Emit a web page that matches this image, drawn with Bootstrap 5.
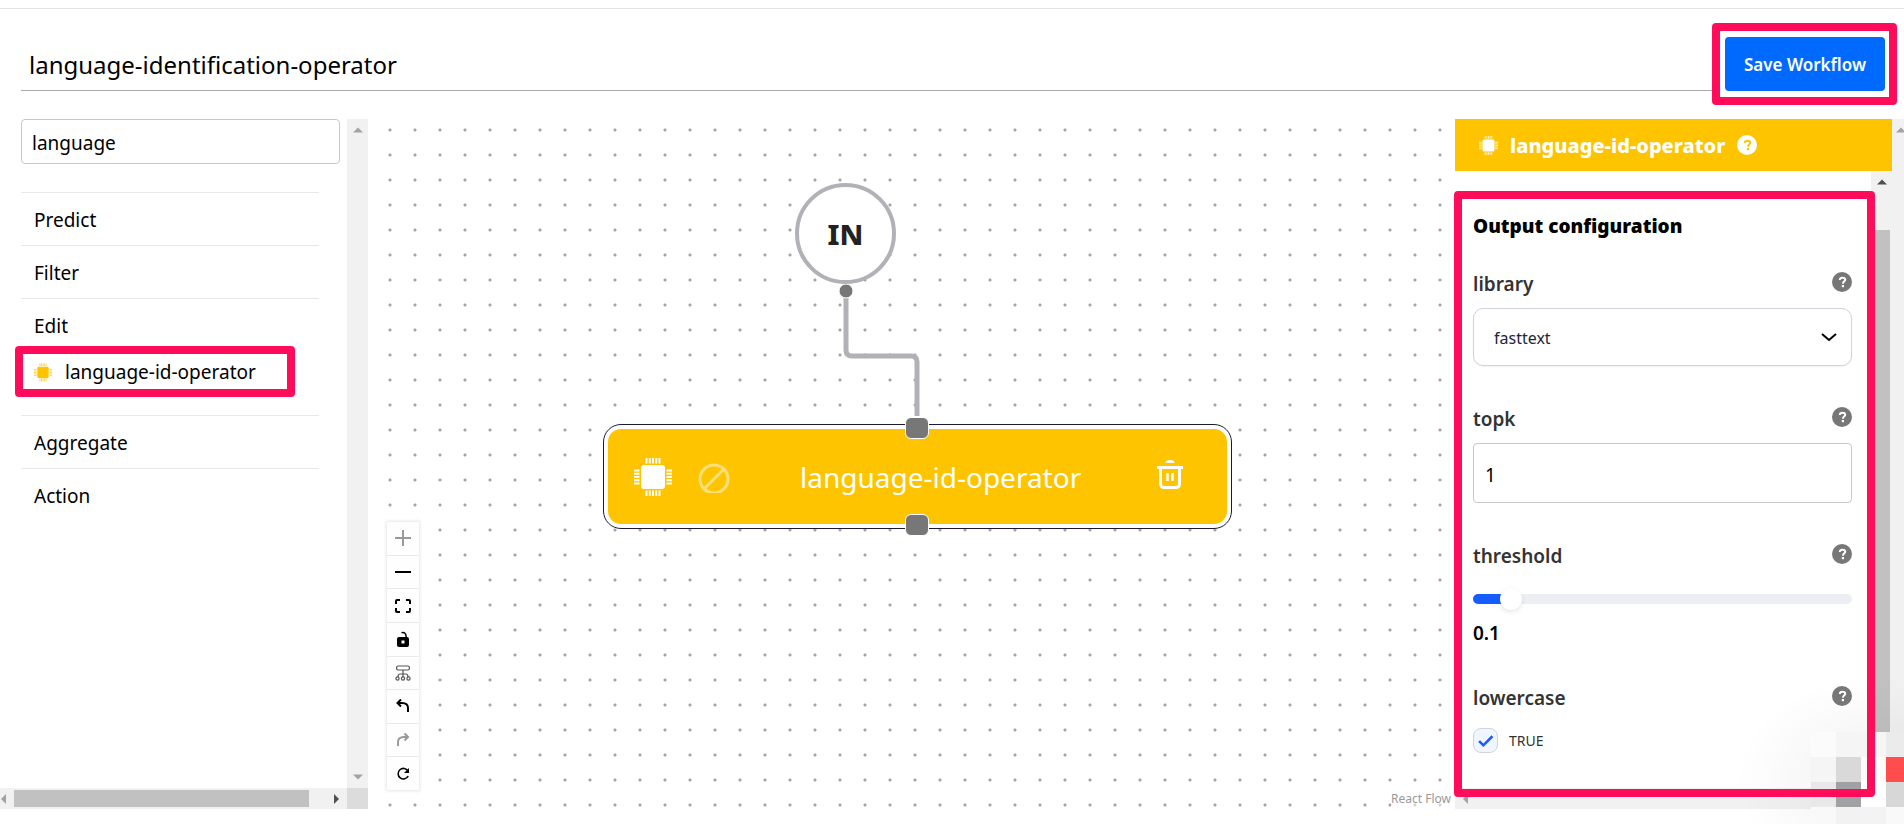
<!DOCTYPE html>
<html lang="en">
<head>
<meta charset="utf-8">
<meta name="viewport" content="width=device-width, initial-scale=1">
<title>language-identification-operator</title>
<link href="https://cdn.jsdelivr.net/npm/bootstrap@5.3.0/dist/css/bootstrap.min.css" rel="stylesheet">
<script src="https://cdn.jsdelivr.net/npm/bootstrap@5.3.0/dist/js/bootstrap.bundle.min.js"></script>
<style>
  :root { --pink: #ff0d5b; --amber: #ffc400; --wire: #b1b1b7; }
  body { font-family: "Noto Sans", "Open Sans", sans-serif; color: #000; background: #fff; overflow: hidden; }
  .top-rule { height: 9px; border-bottom: 1px solid #e4e4e8; }
  .marked { border: 8px solid var(--pink); border-radius: 4px; }

  .page-head { padding: 14px 7px 14px 21px; }
  .title-input { height: 68px; padding: 16px 8px 0; border: 0; border-bottom: 1px solid #a8a8a8; font-size: 24px; background: none; color: #000; outline: 0; min-width: 0; }
  .save-mark { padding: 6px 4px 6px 5px; }
  .save-btn { width: 160px; height: 54px; background: #006aff; color: #fff; border: 0; border-radius: 4px; font-size: 17px; font-weight: 600; padding: 2px 0 0; }

  /* scroll tracks */
  .track { background: #f1f1f1; }
  .track-v { width: 21px; padding: 8px 0; }
  .track-h { height: 21px; }
  .track svg { display: block; }
  .corner { width: 21px; background: #dcdcdc; }
  .side-thumb { height: 17px; background: #c1c1c1; width: 295px; }

  .main-row { margin-bottom: 15px; }
  .sidebar { width: 368px; }
  .search-input { height: 45px; border: 1px solid #c8c8c8; border-radius: 4px; font-size: 19px; padding: 2px 10px 0; color: #000; width: 319px; }
  .side-main { padding: 0 7px 0 21px; }
  .groups { width: 298px; margin-top: 28px; }
  .group { border-top: 1px solid #e8e8e8; font-size: 19px; height: 53px; line-height: 28px; padding: 13px 13px 0; }
  .group.open { height: 117px; }
  .op-mark { width: 280px; height: 51px; margin: 6px 0 0 -19px; padding: 4px 11px 0; border-width: 8px; }
  .op-mark a { color: #000; text-decoration: none; gap: 13px; line-height: 28px; }

  .flow { background: radial-gradient(circle at 12px 12px, #a4a4a8 1px, transparent 2px) 10px -1px / 25px 25px; }
  .wires { left: 0; top: 0; width: 100%; height: 100%; }
  .in-node { left: 427px; top: 64px; width: 101px; height: 101px; border: 4px solid var(--wire); border-radius: 50%; background: #fff; font-size: 29px; font-weight: 800; color: #222; }
  .op-node { left: 235px; top: 305px; width: 629px; height: 105px; border: 1px solid #1a1a33; border-radius: 18px; background: #fff; padding: 4px; }
  .op-body { background: var(--amber); border-radius: 13px; color: #fff; font-size: 28px; padding: 0 44px 0 26px; }
  .handle { width: 24px; height: 22px; border-radius: 6px; background: #777; border: 1px solid #fff; left: 301px; }
  .handle-in { top: -8px; }
  .handle-out { bottom: -8px; }
  .op-name { margin: 0 0 0 70px; }
  .mini-btn { border: 0; background: none; padding: 0; display: block; line-height: 0; color: inherit; }
  .ban { margin-left: 26px; }
  .tools { left: 19px; bottom: 19px; width: 32px; height: 268px; background: #fefefe; box-shadow: 0 0 3px 1px rgba(0,0,0,.1); }
  .tools button + button { border-top: 1px solid #eaeaea; }
  .credit { right: 4px; bottom: 0; font-size: 12px; line-height: 20px; color: #999; background: rgba(255,255,255,.5); text-decoration: none; }

  .panel-col { width: 449px; }
  .panel-head { height: 52px; background: var(--amber); color: #fff; font-size: 20px; font-weight: 800; padding: 0 24px; }
  .panel-head .name { margin: 2px 12px 0 12px; }
  .outer-track { width: 12px; padding-top: 8px; overflow: hidden; }
  .panel-thumb { width: 15px; height: 502px; background: #c1c1c1; margin: 45px 0 0 4px; }
  .form-mark { z-index: 2; margin: 20px -4px -9px -1px; height: 606px; padding: 13px 15px 0 11px; }
  .form-title { font-size: 19px; line-height: 28px; font-weight: 900; margin: 0 0 32px; }
  .field-row { height: 24px; margin-bottom: 12px; font-size: 19px; line-height: 24px; font-weight: 600; color: #333; }
  .field-gap { margin-bottom: 41px; }
  .lib-select { height: 58px; border: 1px solid #d0d3dc; border-radius: 10px; font-size: 16px; color: #222633; padding: 2px 20px 0; box-shadow: 0 1px 2px rgba(0,0,0,.05);
    background-image: url("data:image/svg+xml,%3Csvg xmlns='http://www.w3.org/2000/svg' viewBox='0 0 16 16'%3E%3Cpath fill='none' stroke='%23000' stroke-width='2' d='M1 5l7 6 7-6'/%3E%3C/svg%3E"); background-position: right 14px center; background-size: 16px; }
  .topk-input { height: 60px; border: 1px solid #c8c8c8; border-radius: 4px; font-size: 19px; padding: 4px 11px 0; color: #000; }
  .slide { height: 22px; margin-top: 20px; margin-bottom: 11px; }
  .slide::before { content: ""; position: absolute; inset: 6px 0; border-radius: 5px; background: linear-gradient(90deg, #155dff 10%, #edeef3 10%); }
  .slide input { position: relative; display: block; width: calc(100% + 22px); height: 22px; margin: 0 -11px; appearance: none; background: none; }
  .slide input::-webkit-slider-thumb { appearance: none; width: 22px; height: 22px; border-radius: 50%; background: #fff; border: 0; box-shadow: 0 2px 5px rgba(0,0,0,.1); }
  .slide-value { font-size: 19px; line-height: 24px; font-weight: 600; color: #000; }
  .tick { width: 25px; height: 25px; margin: 0; border: 1px solid #cfd4de; }
  .tick.form-check-input { border-radius: 8px; }
  .tick:checked { border-color: #cfd4de; background-color: #f1f5ff; }
  .tick.form-check-input:checked { background-size: 17px;
    background-image: url("data:image/svg+xml,%3Csvg xmlns='http://www.w3.org/2000/svg' viewBox='0 0 16 16'%3E%3Cpath fill='none' stroke='%23155dff' stroke-width='2.4' d='M2 8.500l4 4L14.500 4'/%3E%3C/svg%3E"); }
  .tick-label { font-size: 14px; color: #333; }
  .lower-row { gap: 11px; margin-top: 18px; }

  /* corner widget */
  .mosaic { right: 0; bottom: 0; width: 93px; height: 92px; display: grid; grid-template: repeat(3, 25px) 17px / repeat(3, 25px) 18px; }
  .glow { right: 0; bottom: 0; width: 170px; height: 150px; background: radial-gradient(ellipse at 85% 70%, rgba(0,0,0,.06), transparent 70%); }
</style>
</head>
<body>
<svg width="0" height="0" class="position-absolute" aria-hidden="true">
  <symbol id="chip" viewBox="0 0 38 38">
    <rect x="7" y="7" width="24" height="24" rx="3"/>
    <path fill="none" stroke="currentColor" stroke-width="2" d="M12.500 0v5.500M15.800 0v5.500M19 0v5.500M22.200 0v5.500M25.500 0v5.500M12.500 32.500V38M15.800 32.500V38M19 32.500V38M22.200 32.500V38M25.500 32.500V38M0 12.500h5.500M0 15.800h5.500M0 19h5.500M0 22.200h5.500M0 25.500h5.500M32.500 12.500H38M32.500 15.800H38M32.500 19H38M32.500 22.200H38M32.500 25.500H38"/>
  </symbol>
  <symbol id="help" viewBox="0 0 20 20">
    <circle cx="10" cy="10" r="10" fill="currentColor"/>
    <path fill="none" stroke="var(--q, #fff)" stroke-width="2" d="M7.800 8c0-3.200 5.400-3 5.400-.3 0 1.900-2.300 1.900-2.300 4"/>
    <rect x="9.800" y="13" width="2.200" height="2.200" fill="var(--q, #fff)"/>
  </symbol>
  <symbol id="up" viewBox="0 0 10 5"><path d="M0 5l5-5 5 5z"/></symbol>
</svg>

<div class="d-flex flex-column min-vh-100">
  <div class="top-rule"></div>
  <header class="page-head d-flex align-items-start">
    <input class="title-input flex-grow-1" type="text" value="language-identification-operator" aria-label="Workflow name">
    <div class="save-mark marked"><button class="save-btn btn" type="button">Save Workflow</button></div>
  </header>

  <main class="main-row d-flex flex-grow-1">
    <aside class="sidebar d-flex flex-column flex-shrink-0">
      <div class="d-flex flex-grow-1">
        <div class="side-main flex-grow-1">
          <input class="search-input" type="text" value="language" aria-label="Search operators">
          <div class="groups">
            <div class="group">Predict</div>
            <div class="group">Filter</div>
            <div class="group open">Edit
              <div class="op-mark marked"><a href="#" class="d-flex align-items-center">
                <svg width="18" height="19" fill="#ffc400" color="#ffd34d"><use href="#chip"/></svg>language-id-operator</a></div>
            </div>
            <div class="group">Aggregate</div>
            <div class="group">Action</div>
          </div>
        </div>
        <div class="track track-v d-flex flex-column justify-content-between align-items-center" aria-hidden="true">
          <svg width="10" height="6" fill="#a3a3a3"><use href="#up"/></svg>
          <svg width="10" height="6" viewBox="0 0 10 5" fill="#a3a3a3"><path d="M0 0l5 5 5-5z"/></svg>
        </div>
      </div>
      <div class="track-h d-flex" aria-hidden="true">
        <div class="track flex-grow-1 d-flex align-items-center justify-content-between pe-2">
          <div class="d-flex align-items-center gap-2">
            <svg width="6" height="10" fill="#a3a3a3"><path d="M6 0v10L1 5z"/></svg>
            <div class="side-thumb"></div>
          </div>
          <svg width="5" height="10" fill="#505050"><path d="M0 0v10l5-5z"/></svg>
        </div>
        <div class="corner"></div>
      </div>
    </aside>

    <section class="flow flex-grow-1 position-relative overflow-hidden">
      <svg class="wires position-absolute" aria-hidden="true">
        <path d="M478 179v52q0 6 6 6h59q6 0 6 6v54" fill="none" stroke="#b1b1b7" stroke-width="5"/>
        <circle cx="478" cy="172" r="7" fill="#777" stroke="#fff"/>
      </svg>
      <div class="in-node position-absolute d-flex align-items-center justify-content-center">IN</div>
      <div class="op-node position-absolute">
        <div class="op-body h-100 d-flex align-items-center">
          <svg class="flex-shrink-0" width="38" height="38" fill="#fff"><use href="#chip"/></svg>
          <button class="mini-btn ban" type="button" aria-label="Disable"><svg width="32" height="32" fill="none" stroke="#ffe07a" stroke-width="3"><circle cx="16" cy="18" r="14"/><path d="M6 28L26 8"/></svg></button>
          <span class="op-name flex-grow-1 text-nowrap">language-id-operator</span>
          <button class="mini-btn" type="button" aria-label="Delete"><svg width="26" height="38" fill="none" stroke="#fff" stroke-width="3"><path d="M0 9.500h26M3.500 10v15.500q0 4 4 4h11q4 0 4-4V10"/><path stroke-width="2.500" d="M10.500 15v8M15.500 15v8"/><path fill="#fff" stroke="none" d="M8.500 5q0-3 4.500-3t4.500 3z"/></svg></button>
        </div>
        <div class="handle handle-in position-absolute"></div>
        <div class="handle handle-out position-absolute"></div>
      </div>
      <div class="tools position-absolute d-flex flex-column">
        <button class="mini-btn flex-fill" type="button" aria-label="Zoom in"><svg width="16" height="16" stroke="#999" stroke-width="2"><path d="M0 8h16M8 0v16"/></svg></button>
        <button class="mini-btn flex-fill" type="button" aria-label="Zoom out"><svg width="16" height="16" stroke="#000" stroke-width="2"><path d="M0 8h16"/></svg></button>
        <button class="mini-btn flex-fill" type="button" aria-label="Fit view"><svg width="16" height="16" fill="none" stroke="#000" stroke-width="2"><path d="M1 6V3q0-1 1-1h3M11 2h3q1 0 1 1v3M15 10v3q0 1-1 1h-3M5 14H2q-1 0-1-1v-3"/></svg></button>
        <button class="mini-btn flex-fill" type="button" aria-label="Unlock"><svg width="16" height="16"><path fill-rule="evenodd" d="M4 6h8q2 0 2 2v6q0 2-2 2H4q-2 0-2-2V8q0-2 2-2zM6.500 9.500v3h3v-3z"/><path fill="none" stroke="#000" stroke-width="1.500" d="M6.500 1.800Q11 .5 11.200 6"/></svg></button>
        <button class="mini-btn flex-fill" type="button" aria-label="Auto layout"><svg width="16" height="16" fill="none" stroke="#555" stroke-width="1.200"><rect x="1.600" y="1" width="12.800" height="4" rx="1.500"/><path d="M8 5v7M3 12q0-3 2-3h6q2 0 2 3"/><circle cx="2.500" cy="13.500" r="1.600"/><circle cx="13.500" cy="13.500" r="1.600"/><circle cx="8" cy="13.500" r="1.600"/></svg></button>
        <button class="mini-btn flex-fill" type="button" aria-label="Undo"><svg width="16" height="16" fill="none" stroke="#000" stroke-width="2"><path d="M6 1.500L2.500 5 6 8.500M3 5h4q6 0 6 5v4"/></svg></button>
        <button class="mini-btn flex-fill" type="button" aria-label="Redo"><svg width="16" height="16" fill="none" stroke="#999" stroke-width="2"><path d="M9.500 1.500L13 5 9.500 8.500M12.500 5H9Q3 5 3 10v4"/></svg></button>
        <button class="mini-btn flex-fill" type="button" aria-label="Reset"><svg width="16" height="16" fill="none" stroke="#000" stroke-width="1.600"><path d="M13 5A5.300 5.300 0 1 0 13.200 10"/><path fill="#000" stroke="none" d="M14 2v5H9z"/></svg></button>
      </div>
      <a class="credit position-absolute" href="#">React Flow</a>
    </section>

    <aside class="panel-col d-flex flex-shrink-0 position-relative">
      <div class="flex-grow-1 d-flex flex-column">
        <div class="panel-head d-flex align-items-center">
          <svg width="19" height="19" fill="#fff" color="#ffefc0"><use href="#chip"/></svg>
          <span class="name">language-id-operator</span>
          <svg width="20" height="20" color="#fff" style="--q:#ffc400"><use href="#help"/></svg>
        </div>
        <div class="d-flex flex-grow-1">
          <form class="form-mark marked position-relative flex-grow-1">
            <h2 class="form-title">Output configuration</h2>
            <div class="field-row d-flex justify-content-between"><label for="library">library</label><svg width="20" height="20" color="#777"><use href="#help"/></svg></div>
            <select id="library" class="form-select lib-select field-gap"><option>fasttext</option></select>
            <div class="field-row d-flex justify-content-between"><label for="topk">topk</label><svg width="20" height="20" color="#777"><use href="#help"/></svg></div>
            <input id="topk" class="topk-input w-100 d-block field-gap" type="text" value="1">
            <div class="field-row d-flex justify-content-between"><label for="threshold">threshold</label><svg width="20" height="20" color="#777"><use href="#help"/></svg></div>
            <div class="slide position-relative"><input id="threshold" type="range" min="0" max="1" step="0.1" value="0.1"></div>
            <div class="slide-value field-gap">0.1</div>
            <div class="field-row d-flex justify-content-between"><span>lowercase</span><svg width="20" height="20" color="#777"><use href="#help"/></svg></div>
            <div class="lower-row d-flex align-items-center"><input id="lowercase" class="form-check-input tick" type="checkbox" checked><label class="tick-label" for="lowercase">TRUE</label></div>
          </form>
          <div class="track track-v" aria-hidden="true">
            <svg width="10" height="6" fill="#505050" class="mx-auto"><use href="#up"/></svg>
            <div class="panel-thumb"></div>
          </div>
        </div>
        <div class="track track-h d-flex align-items-center ps-2" aria-hidden="true"><svg width="5" height="10" fill="#a3a3a3"><path d="M5 0v10L0 5z"/></svg></div>
      </div>
      <div class="track outer-track flex-shrink-0 ps-1" aria-hidden="true"><svg width="10" height="6" fill="#a3a3a3"><use href="#up"/></svg></div>
    </aside>
  </main>
</div>
<div class="glow position-absolute"></div>
<div class="mosaic position-absolute" aria-hidden="true">
  <i style="background:#fbfbfb"></i><i style="background:#f5f5f5"></i><i style="background:#f5f5f5"></i><i style="background:#ebebeb"></i>
  <i style="background:#f5f5f5"></i><i style="background:#d9d9d9"></i><i style="background:#fcfcfc"></i><i style="background:#ff4d4d"></i>
  <i style="background:#e8e8e8"></i><i style="background:#a0a1a5"></i><i style="background:#fff"></i><i style="background:#d7d7d7"></i>
  <i style="background:#f9f9f9"></i><i style="background:#f2f2f2"></i><i style="background:#f3f3f3"></i><i style="background:#f9f9f9"></i>
</div>
</body>
</html>
